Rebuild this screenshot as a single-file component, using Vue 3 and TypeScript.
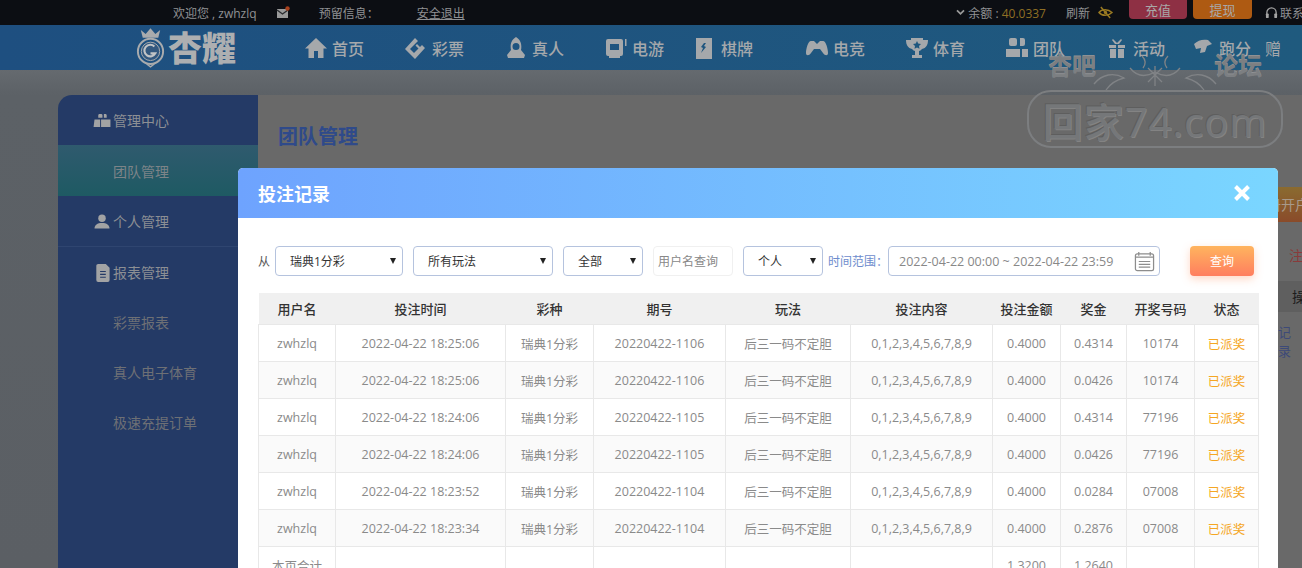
<script setup lang="ts">
type NavItem = { label: string; icon: string }

const navItems: NavItem[] = [
  { label: '首页', icon: 'home' },
  { label: '彩票', icon: 'ticket' },
  { label: '真人', icon: 'live' },
  { label: '电游', icon: 'slot' },
  { label: '棋牌', icon: 'mahjong' },
  { label: '电竞', icon: 'pad' },
  { label: '体育', icon: 'cup' },
  { label: '团队', icon: 'team' },
  { label: '活动', icon: 'gift' },
  { label: '跑分', icon: 'run' },
]

const columns = ['用户名', '投注时间', '彩种', '期号', '玩法', '投注内容', '投注金额', '奖金', '开奖号码', '状态']

const rows = [
  ['2022-04-22 18:25:06', '20220422-1106', '0.4314', '10174'],
  ['2022-04-22 18:25:06', '20220422-1106', '0.0426', '10174'],
  ['2022-04-22 18:24:06', '20220422-1105', '0.4314', '77196'],
  ['2022-04-22 18:24:06', '20220422-1105', '0.0426', '77196'],
  ['2022-04-22 18:23:52', '20220422-1104', '0.0284', '07008'],
  ['2022-04-22 18:23:34', '20220422-1104', '0.2876', '07008'],
]
</script>

<template>
  <div class="page">
    <header class="topbar">
      <span class="welcome">欢迎您 , zwhzlq</span>
      <svg class="mail" viewBox="0 0 14 14" width="14" height="14">
        <rect x="1" y="3" width="11" height="9" fill="#9a9a9a" />
        <path d="M1 4l5.5 4L12 4" stroke="#2a2c30" stroke-width="1.4" fill="none" />
        <circle cx="11.5" cy="2.5" r="2.2" fill="#a8401c" />
      </svg>
      <span class="notice">预留信息：</span>
      <a class="logout">安全退出</a>
      <span class="spacer"></span>
      <svg class="chevron" viewBox="0 0 10 8" width="9" height="7">
        <path d="M1 1.5l4 4 4-4" stroke="#999" stroke-width="2" fill="none" />
      </svg>
      <span class="balance">余额 : <b>40.0337</b></span>
      <span class="refresh">刷新</span>
      <svg class="eye" viewBox="0 0 16 14" width="15" height="13">
        <path d="M1 7c3-4 10-4 14 0-4 4-11 4-14 0z" stroke="#9a7a22" stroke-width="1.6" fill="none" />
        <circle cx="8" cy="7" r="1.8" fill="#9a7a22" />
        <path d="M3 1l10 12" stroke="#9a7a22" stroke-width="1.6" />
      </svg>
      <span class="top-btn pay">充值</span>
      <span class="top-btn draw">提现</span>
      <svg class="phones" viewBox="0 0 14 14" width="13" height="13">
        <path d="M2 9V7a5 5 0 0 1 10 0v2" stroke="#a5a5a5" stroke-width="1.4" fill="none" />
        <rect x="1" y="8" width="3" height="5" rx="1" fill="#a5a5a5" />
        <rect x="10" y="8" width="3" height="5" rx="1" fill="#a5a5a5" />
      </svg>
      <span class="contact">联系</span>
    </header>

    <nav class="nav">
      <div class="logo">
        <svg viewBox="0 0 32 42" width="31" height="41">
          <path d="M8 11L6 3l5 4 5-6 5 6 5-4-2 8z" fill="#a9abad" />
          <circle cx="16" cy="25" r="13" stroke="#a9abad" stroke-width="2" fill="none" />
          <circle cx="16" cy="25" r="9.5" stroke="#a9abad" stroke-width="1" fill="#33587f" />
          <path d="M20 20a6 6 0 1 0 1 7h-5" stroke="#c2c4c6" stroke-width="2.2" fill="none" />
          <path d="M12 38l4 3 4-3" stroke="#a9abad" stroke-width="1.4" fill="none" />
        </svg>
        <span>杏耀</span>
      </div>
      <a v-for="item in navItems" :key="item.label" class="nav-item" :class="item.icon">
        <svg class="nav-icon" viewBox="0 0 24 24" width="24" height="24">
          <path v-if="item.icon === 'home'" d="M12 2L1 12.5h3.5V22h5.5v-7h4v7h5.500v-9.500H23z" />
          <path v-else-if="item.icon === 'ticket'" d="M11 2l3 3-8 8 4 4 8-8 3 3-10 11L1 13zM13 8l3 3-1.500 1.500-3-3z" />
          <path v-else-if="item.icon === 'live'" fill-rule="evenodd" d="M12 1c5 3 6 8 5 13l4 5-1 3H4l-1-3 4-5C6 9 7 4 12 1zm0 6a3.500 3.500 0 1 0 0 7 3.500 3.500 0 0 0 0-7z" />
          <path v-else-if="item.icon === 'slot'" fill-rule="evenodd" d="M4 3h13a2 2 0 0 1 2 2v13a2 2 0 0 1-2 2h-1v2H5v-2H4a2 2 0 0 1-2-2V5a2 2 0 0 1 2-2zm2 5v6h9V8zM21 3h1.500v7H21z" />
          <path v-else-if="item.icon === 'mahjong'" fill-rule="evenodd" d="M3 2h16v21H3zm8 5l-3 4 2 1-2 5 5-6-2-1 2-3z" />
          <path v-else-if="item.icon === 'pad'" d="M6 5h3l3 3 3-3h3c3 0 5 8 5 12 0 3-3 3-5 0l-3-4H9l-3 4c-2 3-5 3-5 0C1 13 3 5 6 5z" />
          <path v-else-if="item.icon === 'cup'" fill-rule="evenodd" d="M6 2h12v2h5c0 5-2 8-6 9-1 1-2 2-3 2v4h3v3H7v-3h3v-4c-1 0-2-1-3-2C3 12 1 9 1 4h5zm6 3l-1.200 2.500-2.800.4 2 2-.5 2.800 2.500-1.300 2.500 1.300-.5-2.800 2-2-2.800-.4z" />
          <path v-else-if="item.icon === 'team'" d="M6 2h4a2 2 0 0 1 2 2v4a2 2 0 0 1-2 2H6a2 2 0 0 1-2-2V4a2 2 0 0 1 2-2zm9 0h3a2 2 0 0 1 2 2v4a2 2 0 0 1-2 2h-3zM1 13h14v8H1zm16 0h6v8h-6z" />
          <path v-else-if="item.icon === 'gift'" d="M4 9h7v3H4zm9 0h7v3h-7zM5 13h6v9H5zm8 0h6v9h-6zM8 3l4 4 4-4 1 1-3 4h-4L7 4z" />
          <path v-else d="M3 8c4-4 9-5 14-4l4 4-5 2-2 6-5 1 1-5-5 1z" />
        </svg>
        <span>{{ item.label }}</span>
      </a>
      <span class="nav-cut">赠</span>
    </nav>

    <main class="main">
      <aside class="side">
        <div class="side-head">
          <svg viewBox="0 0 18 16" width="17" height="15">
            <path d="M6 1h2a1.500 1.500 0 0 1 1.500 1.500V5H5V2.500A1.500 1.500 0 0 1 6 1zm5 0h2a1.500 1.500 0 0 1 1 1.500V5h-3zM1 7h6v8H0zm7 0h10v8H8z" fill="#a2a3a4" />
          </svg>
          管理中心
        </div>
        <div class="side-sub active">团队管理</div>
        <div class="side-head line">
          <svg viewBox="0 0 18 16" width="17" height="15">
            <circle cx="9" cy="4.500" r="4" fill="#a2a3a4" />
            <path d="M1 15.500c0-4 3-6 8-6s8 2 8 6z" fill="#a2a3a4" />
          </svg>
          个人管理
        </div>
        <div class="side-head">
          <svg viewBox="0 0 18 20" width="15" height="19">
            <path d="M5 1h8l4 4v13a2 2 0 0 1-2 2H5a2 2 0 0 1-2-2V3a2 2 0 0 1 2-2z" fill="#a2a3a4" />
            <path d="M7 9h6M7 12h6M7 15h6" stroke="#253a66" stroke-width="1.200" />
          </svg>
          报表管理
        </div>
        <div class="side-sub">彩票报表</div>
        <div class="side-sub">真人电子体育</div>
        <div class="side-sub">极速充提订单</div>
      </aside>
      <section class="content">
        <h1>团队管理</h1>
        <div class="behind">
          <span class="behind-btn">册开户</span>
          <span class="behind-note">注</span>
          <span class="behind-head">操</span>
          <span class="behind-link">记录</span>
        </div>
      </section>
    </main>

    <!-- forum stamp burned into the screenshot -->
    <div class="stamp">
      <div class="stamp-top">
        <span>杏吧</span>
        <svg viewBox="0 0 130 50" width="130" height="50">
          <g fill="none" stroke="#808386" stroke-width="1.300">
            <path d="M4 34c8-10 20-12 30-6-8 2-14 6-18 12M126 34c-8-10-20-12-30-6 8 2 14 6 18 12" />
            <path d="M40 18c8 10 18 8 25 4 7 4 17 6 25-4M52 6c4 4 4 8 1 12M78 6c-4 4-4 8-1 12" />
            <path d="M58 18l14 14M72 18L58 32M65 16v20" />
          </g>
        </svg>
        <span>论坛</span>
      </div>
      <div class="stamp-pill">回家74.com</div>
    </div>

    <div class="modal">
      <div class="modal-head">
        <span>投注记录</span>
        <svg viewBox="0 0 18 18" width="18" height="18">
          <path d="M2.500 2.500l13 13M15.500 2.500l-13 13" stroke="#fff" stroke-width="4" />
        </svg>
      </div>
      <div class="filters">
        <span class="from">从</span>
        <div class="select w128">瑞典1分彩<i></i></div>
        <div class="select w140">所有玩法<i></i></div>
        <div class="select w80">全部<i></i></div>
        <div class="search">用户名查询</div>
        <div class="select w80">个人<i></i></div>
        <span class="range-label">时间范围：</span>
        <div class="range">
          <span>2022-04-22 00:00 ~ 2022-04-22 23:59</span>
          <svg viewBox="0 0 22 22" width="21" height="21">
            <rect x="1.500" y="3" width="19" height="17.500" rx="2" fill="none" stroke="#8d8d8d" stroke-width="1.300" />
            <path d="M5 1v4M17 1v4M1.500 6.500h19M5 11h12M5 14h12M5 17h12" stroke="#8d8d8d" stroke-width="1.300" />
          </svg>
        </div>
        <button class="query" type="button">查询</button>
      </div>
      <table class="records">
        <colgroup>
          <col style="width: 77px" />
          <col style="width: 170px" />
          <col style="width: 88px" />
          <col style="width: 132px" />
          <col style="width: 125px" />
          <col style="width: 142px" />
          <col style="width: 68px" />
          <col style="width: 66px" />
          <col style="width: 68px" />
          <col style="width: 64px" />
        </colgroup>
        <thead>
          <tr>
            <th v-for="col in columns" :key="col">{{ col }}</th>
          </tr>
        </thead>
        <tbody>
          <tr v-for="(row, i) in rows" :key="i">
            <td>zwhzlq</td>
            <td>{{ row[0] }}</td>
            <td>瑞典1分彩</td>
            <td>{{ row[1] }}</td>
            <td>后三一码不定胆</td>
            <td>0,1,2,3,4,5,6,7,8,9</td>
            <td>0.4000</td>
            <td>{{ row[2] }}</td>
            <td>{{ row[3] }}</td>
            <td class="paid">已派奖</td>
          </tr>
          <tr>
            <td>本页合计</td>
            <td></td>
            <td></td>
            <td></td>
            <td></td>
            <td></td>
            <td>1.3200</td>
            <td>1.2640</td>
            <td></td>
            <td></td>
          </tr>
        </tbody>
      </table>
    </div>
  </div>
</template>

<style>
html,
body {
  margin: 0;
  overflow: hidden;
}
</style>

<style scoped>
.page {
  position: relative;
  width: 1302px;
  height: 568px;
  overflow: hidden;
  background: #5b5f64;
  font-family: "Open Sans", "Noto Sans CJK SC", sans-serif;
  font-size: 13px;
}

.topbar {
  display: flex;
  align-items: center;
  height: 25px;
  padding-left: 173px;
  background: #0c0e13;
  color: #909193;
  font-size: 12px;
  white-space: nowrap;
}

.mail {
  margin-left: 19px;
}

.notice {
  margin-left: 29px;
}

.logout {
  margin-left: 38px;
  text-decoration: underline;
}

.spacer {
  flex: 1;
}

.chevron {
  margin-right: 3px;
}

.balance b {
  color: #8f6f24;
  font-weight: 400;
}

.refresh {
  margin-left: 20px;
}

.eye {
  margin-left: 8px;
}

.top-btn {
  display: flex;
  align-items: center;
  justify-content: center;
  height: 19px;
  margin-top: -6px;
  border-radius: 0 0 4px 4px;
  color: #a8a8a8;
  font-size: 13px;
}

.pay {
  width: 58px;
  margin-left: 16px;
  background: #8e3044;
}

.draw {
  width: 59px;
  margin-left: 6px;
  background: #ae5a12;
}

.phones {
  margin-left: 13px;
}

.contact {
  width: 22px;
  margin-left: 2px;
  overflow: hidden;
}

.nav {
  display: flex;
  align-items: center;
  height: 45px;
  background: linear-gradient(90deg, #1e4f80, #1f5a7e);
  white-space: nowrap;
}

.logo {
  display: flex;
  align-items: center;
  width: 300px;
  padding-left: 135px;
  box-sizing: border-box;
  gap: 2px;
  color: #adafb1;
  font-size: 34px;
  font-weight: 900;
  line-height: 1;
}

.nav-item {
  display: flex;
  align-items: center;
  width: 100px;
  flex: none;
  gap: 4px;
  padding-left: 4px;
  box-sizing: border-box;
  color: #a5a8ab;
  font-size: 16px;
  font-weight: 500;
}

.nav-icon {
  fill: #a5a8ab;
}

.nav-item.mahjong {
  margin-left: -11px;
  width: 112px;
}

.nav-item.run {
  margin-left: -14px;
  width: 100px;
}

.nav-cut {
  color: #a5a8ab;
  font-size: 16px;
  margin-left: -22px;
}

.main {
  display: flex;
  height: 498px;
  padding: 25px 0 0 58px;
  box-sizing: border-box;
  background: linear-gradient(180deg, #656a6f 0, #5c6166 25px, #5b5f64 100%);
}

.side {
  width: 200px;
  flex: none;
  background: #243a66;
  border-radius: 14px 0 0 0;
  color: #8c8f94;
  font-size: 14px;
}

.side-head {
  display: flex;
  align-items: center;
  height: 50px;
  padding-left: 35px;
  gap: 2px;
  color: #8c8f94;
}

.side-head svg {
  width: 18px;
  flex: none;
}

.side-head.line {
  border-bottom: 1px solid #2f4570;
}

.side-sub {
  display: flex;
  align-items: center;
  height: 50px;
  padding-left: 55px;
  color: #6e7075;
}

.side-sub.active {
  height: 51px;
  background: linear-gradient(180deg, #2f5a6e, #1e5a63);
  color: #7d8488;
}

.content {
  position: relative;
  flex: 1;
  background: #696969;
}

.content h1 {
  margin: 29px 0 0 20px;
  color: #2f4a8a;
  font-size: 20px;
  font-weight: 700;
  line-height: 25px;
}

.behind {
  position: absolute;
  inset: 0;
  font-size: 14px;
}

.behind-btn {
  position: absolute;
  left: 1008px;
  top: 92px;
  width: 60px;
  height: 35px;
  padding-left: 1px;
  line-height: 35px;
  white-space: nowrap;
  background: linear-gradient(180deg, #8a6b30, #8a4b2a);
  color: #a89a8a;
  overflow: hidden;
}

.behind-note {
  position: absolute;
  left: 1031px;
  top: 150px;
  color: #8a3a3a;
}

.behind-head {
  position: absolute;
  left: 1008px;
  top: 186px;
  width: 60px;
  height: 31px;
  padding-left: 26px;
  box-sizing: border-box;
  line-height: 31px;
  background: #5f5f5f;
  color: #1c1c1c;
}

.behind-link {
  position: absolute;
  left: 1020px;
  top: 227px;
  color: #3d4a78;
  font-size: 13px;
}

.stamp {
  position: absolute;
  left: 1027px;
  top: 48px;
  width: 256px;
  color: #7c7f82;
}

.stamp-top {
  display: flex;
  align-items: center;
  justify-content: center;
  height: 42px;
  font-size: 24px;
  font-weight: 700;
  gap: 0;
}

.stamp-top span {
  margin-top: -10px;
  text-shadow: 0 -1px 0 #8f9194;
}

.stamp-top svg {
  flex: none;
  margin: 6px -6px -6px;
}

.stamp-pill {
  width: 256px;
  height: 58px;
  box-sizing: border-box;
  border: 2px solid #7c7e80;
  border-radius: 24px;
  color: #757779;
  font-size: 40px;
  line-height: 60px;
  font-weight: 500;
  letter-spacing: 1px;
  text-align: center;
  white-space: nowrap;
  text-shadow: 1px 1px 0 #838383, -1px -1px 0 #5e5e5e;
}

.modal {
  position: absolute;
  left: 238px;
  top: 168px;
  width: 1040px;
  height: 440px;
  background: #fff;
  border-radius: 5px 5px 0 0;
  overflow: hidden;
}

.modal-head {
  display: flex;
  align-items: center;
  justify-content: space-between;
  height: 50px;
  padding: 0 27px 0 20px;
  background: linear-gradient(90deg, #6ea3fe, #7ad6ff);
  color: #fff;
  font-size: 18px;
  font-weight: 700;
}

.modal-head svg {
  margin-top: -1px;
}

.filters {
  display: flex;
  align-items: center;
  height: 30px;
  margin-top: 28px;
  padding-left: 20px;
  color: #555;
  font-size: 12px;
  white-space: nowrap;
}

.from {
  width: 17px;
}

.select,
.search,
.range {
  position: relative;
  display: flex;
  align-items: center;
  height: 30px;
  box-sizing: border-box;
  flex: none;
  border: 1px solid #b5c3de;
  border-radius: 4px;
  background: #fff;
}

.select {
  padding-left: 14px;
  margin-right: 10px;
  color: #333;
}

.select i {
  position: absolute;
  right: 6px;
  top: 11px;
  width: 0;
  height: 0;
  border-left: 3.5px solid transparent;
  border-right: 3.500px solid transparent;
  border-top: 6px solid #222;
}

.w128 {
  width: 128px;
}

.w140 {
  width: 140px;
}

.w80 {
  width: 80px;
}

.search {
  width: 80px;
  margin-right: 10px;
  padding-left: 4px;
  border-color: #f0f0f0;
  color: #888;
}

.range-label {
  width: 60px;
  margin-left: -5px;
  color: #6d8ccd;
}

.range {
  width: 272px;
  justify-content: space-between;
  padding: 0 4px 0 10px;
  color: #888;
  font-size: 12.5px;
}

.query {
  width: 64px;
  height: 30px;
  flex: none;
  margin-left: 30px;
  padding: 0;
  border: 0;
  border-radius: 4px;
  background: linear-gradient(180deg, #ffb45e, #ff7e5f);
  box-shadow: 0 3px 8px rgba(255, 140, 90, 0.35);
  color: #fff;
  font: inherit;
  font-size: 12px;
}

.records {
  width: 1000px;
  margin: 17px 0 0 20px;
  border-collapse: collapse;
  table-layout: fixed;
}

.records th {
  height: 31px;
  padding: 0;
  background: #f0f0f0;
  color: #333;
  font-size: 13px;
  font-weight: 500;
}

.records td {
  height: 36px;
  padding: 0;
  border: 1px solid #e8e8e8;
  color: #8a8a8a;
  font-size: 12.500px;
  text-align: center;
}

.records tbody tr:nth-child(even) td {
  background: #fafafa;
}

.records td.paid {
  color: #f5a623;
}
</style>
